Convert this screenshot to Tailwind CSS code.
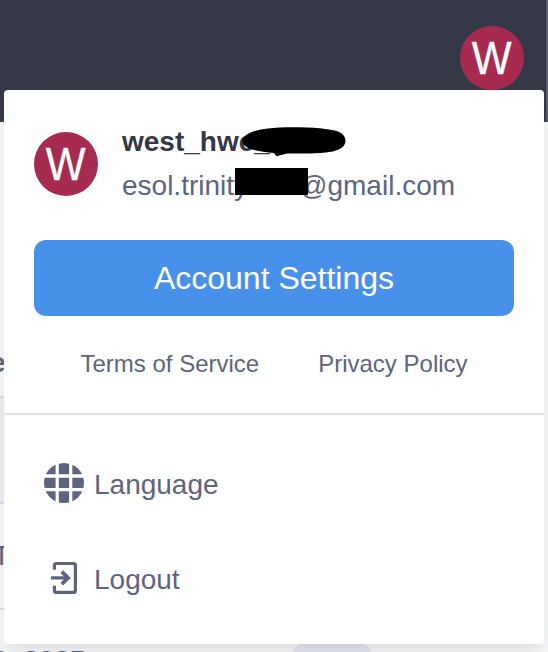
<!DOCTYPE html>
<html lang="en">
<head>
<meta charset="utf-8">
<title>Account menu</title>
<script src="https://cdn.jsdelivr.net/npm/@tailwindcss/browser@4"></script>
</head>
<body class="relative h-[652px] w-[548px] overflow-hidden bg-[#f4f4f5] font-['Liberation_Sans',Arial,sans-serif] text-[28px] text-[#5e6480]">
  <header class="flex h-[122px] justify-end border-r-2 border-[#5b5e6c] bg-[#353846] pt-[26px] pr-[22px]">
    <div class="flex size-16 items-center justify-center rounded-full bg-[#a72a50] text-[44px] leading-none text-white"><span class="[transform:scale(0.96,1.04)] [-webkit-text-stroke:0.3px_white]">W</span></div>
  </header>

  <!-- Page content behind the menu -->
  <main class="h-[530px] w-[500px] overflow-hidden">
    <div class="flex h-[276px] items-end border-b-2 border-[#dcdce3] pb-[17px] font-bold leading-8"><span class="-ml-[10px]">e</span></div>
    <div class="h-[106px] border-b-2 border-[#d9d9e1] bg-[#ebebf0]"></div>
    <div class="flex h-[106px] items-center border-b-2 border-[#dcdce3]"><span class="-ml-[7px]">T</span></div>
    <div class="flex items-start pt-[30px]">
      <span class="mt-[5px] -ml-2 w-[298px] font-bold leading-8">2, 2025</span>
      <span class="mt-px h-20 w-[84px] rounded-[20px] bg-[#e0e2ea]"></span>
    </div>
  </main>

  <section class="absolute top-[90px] left-1 h-[554px] w-[540px] rounded bg-white shadow-[0_12px_16px_-6px_rgba(60,64,80,0.12)]">
    <div class="flex h-[325px] flex-col border-b-2 border-[#e1e1e8] px-[30px] pt-[30px]">
      <div class="flex h-[90px] shrink-0 gap-6">
        <div class="mt-3 flex size-16 shrink-0 items-center justify-center rounded-full bg-[#a72a50] text-[44px] leading-none text-white"><span class="[transform:scale(0.96,1.04)] [-webkit-text-stroke:0.3px_white]">W</span></div>
        <div>
          <div class="mt-[6px] h-8 leading-8 font-bold text-[#353846]">west_hwc_</div>
          <div class="mt-3 h-8 leading-8 whitespace-nowrap">esol.trinityxxxx<span class="-ml-[5px]">@gmail.com</span></div>
        </div>
      </div>
      <button class="mt-[30px] h-[76px] shrink-0 rounded-xl bg-[#4891ea] text-[32px] leading-none text-white">Account Settings</button>
      <div class="mt-[32px] flex justify-center gap-[59px] text-[24px] leading-8">
        <a>Terms of Service</a><a>Privacy Policy</a>
      </div>
    </div>
    <nav class="pt-11 pl-10">
      <a class="flex h-12 items-center gap-[10px]">
        <svg class="size-10" viewBox="0 0 40 40"><defs><clipPath id="g"><circle cx="20" cy="20" r="20"/></clipPath></defs><path clip-path="url(#g)" fill="#5e6480" d="M0 0h11.6v11.3H0zM14.8 0h10.3v11.3H14.8zM28.3 0h12v11.3h-12zM0 14.7h11.6v10.4H0zM14.8 14.7h10.3v10.4H14.8zM28.3 14.7h12v10.4h-12zM0 28.3h11.6v12H0zM14.8 28.3h10.3v12H14.8zM28.3 28.3h12v12h-12z"/></svg>
        <span class="pt-1">Language</span>
      </a>
      <a class="mt-[47px] flex h-12 items-center gap-[10px]">
        <svg class="size-10" viewBox="0 0 40 40" fill="none" stroke="#5e6480" stroke-width="3.2"><path d="M10.4 11.8V7.5q0-2 2-2h17q2 0 2 2v24.9q0 2-2 2h-17q-2 0-2-2v-4.6M7 19.9h17.5"/><path d="M17.8 13.6l6.3 6.3-6.3 6.3" stroke-width="3.8"/></svg>
        <span class="pt-1">Logout</span>
      </a>
    </nav>
  </section>

  <!-- Redaction marks over the account details -->
  <svg class="absolute top-[120px] left-[230px] h-20 w-[130px]" viewBox="0 0 130 80"><path d="M12.5 21C13 12 31 8.4 50 7.5C74 6.7 99 8.2 108 11.5C114 14 115.5 18 115.5 21C115 28 108 32 90 33C72 34 62 33.2 57 33.5L46.5 36.3L44 33C28 32 13 29 12.5 21Z"/><rect x="5" y="48" width="73" height="27"/></svg>
</body>
</html>
